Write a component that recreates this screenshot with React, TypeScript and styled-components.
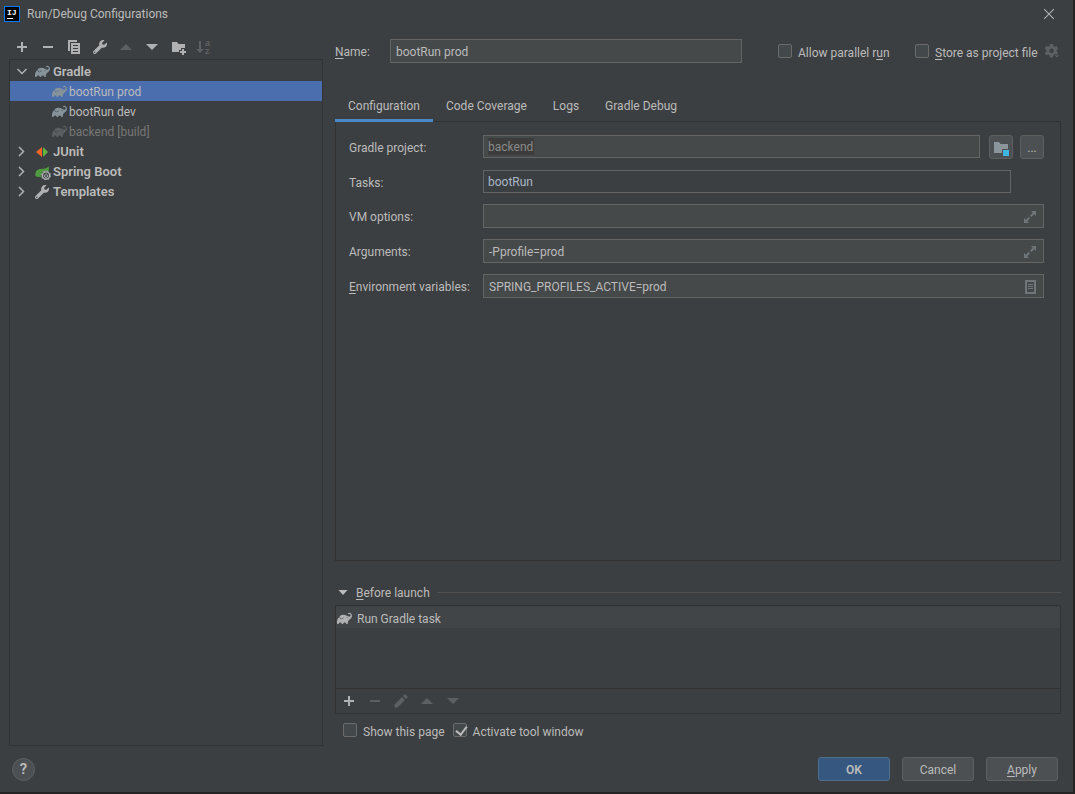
import React, { useState } from "react";
import styled, { createGlobalStyle, css } from "styled-components";
import { SiGradle } from "react-icons/si";
import { FaWrench } from "react-icons/fa";

const c = {
  bg: "#3c3f41",
  field: "#45494a",
  fieldBorder: "#646464",
  line: "#323232",
  text: "#bbbbbb",
  muted: "#777777",
  icon: "#afb1b3",
  iconOff: "#5d6062",
  select: "#4b6eaf",
  accent: "#4a88c7",
};

const GlobalStyle = createGlobalStyle`
  * { box-sizing: border-box; }
  body { margin: 0; background: #2b2b2b; }
  body, button, input { font-family: Roboto, "Noto Sans CJK KR", sans-serif; font-size: 12px; line-height: 20px; color: ${c.text}; }
  button { padding: 0; border: 0; background: none; cursor: default; }
  ul { list-style: none; margin: 0; padding: 0; }
  svg { display: block; flex: none; }
  u { text-underline-offset: 2px; }
`;

const Backdrop = styled.div`
  display: flex;
  min-height: 100vh;
  padding: 0 2px 2px 0;
  background: #242424;
`;

const Dialog = styled.div`
  flex: 1;
  min-width: 0;
  display: flex;
  flex-direction: column;
  background: ${c.bg};
`;

const TitleBar = styled.header`
  display: flex;
  align-items: center;
  height: 27px;
  padding: 0 11px 0 4px;
  gap: 7px;
`;

const Title = styled.h1`
  flex: 1;
  margin: 0;
  padding-top: 1px;
  font-size: 12px;
  font-weight: 400;
`;

const Main = styled.main`
  flex: 1;
  display: grid;
  grid-template-columns: 314px minmax(0, 1fr);
  gap: 12px;
  padding: 8px 12px 0 9px;
`;

const Sidebar = styled.aside`
  display: flex;
  flex-direction: column;
`;

const Toolbar = styled.div`
  display: flex;
  align-items: center;
  height: 24px;
`;

const ToolButton = styled.button<{ $narrow?: boolean }>`
  display: flex;
  align-items: center;
  justify-content: center;
  width: ${(p) => (p.$narrow ? 18 : 26)}px;
  height: 24px;
  color: ${c.icon};
  &:disabled { color: ${c.iconOff}; }
`;

const Tree = styled.ul`
  && { padding-top: 1px; }
  flex: 1;
  border: 1px solid ${c.line};
`;

const TreeRow = styled.button<{ $selected?: boolean; $child?: boolean; $bold?: boolean; $off?: boolean }>`
  display: flex;
  align-items: center;
  width: 100%;
  height: 20px;
  padding-top: 1px;
  padding-left: ${(p) => (p.$child ? 42 : 4)}px;
  font-size: ${(p) => (p.$bold ? 13 : 12)}px;
  font-weight: ${(p) => (p.$bold ? 600 : 400)};
  color: ${(p) => (p.$off ? c.muted : c.text)};
  background: ${(p) => (p.$selected ? c.select : "transparent")};
`;

const TreeIcon = styled.span<{ $off?: boolean; $group?: boolean }>`
  display: flex;
  width: ${(p) => (p.$group ? 18 : 17)}px;
  color: ${(p) => (p.$off ? "#5a5e61" : "#87939a")};
`;

const Expander = styled.span`
  display: flex;
  width: 21px;
  color: ${c.icon};
`;

const Content = styled.section`
  display: flex;
  flex-direction: column;
  padding: 4px 0 4px;
`;

const NameRow = styled.div`
  display: flex;
  align-items: center;
`;

const NameLabel = styled.label`
  width: 55px;
  padding-top: 2px;
`;

const field = css`
  height: 24px;
  min-width: 0;
  padding: 1px 5px 0;
  border: 1px solid ${c.fieldBorder};
  border-radius: 0;
  background: ${c.field};
  outline: none;
`;

const NameInput = styled.input`
  ${field}
  flex: 1;
  margin-right: 36px;
`;

const CheckLabel = styled.label<{ $width?: number }>`
  display: flex;
  align-items: center;
  gap: 6px;
  min-width: ${(p) => (p.$width ? `${p.$width}px` : "auto")};
  padding-top: 4px;
  white-space: nowrap;
`;

const Check = styled.input.attrs({ type: "checkbox" })`
  appearance: none;
  position: relative;
  width: 14px;
  height: 14px;
  margin: 0 0 4px;
  border: 1px solid #6b6b6b;
  border-radius: 2px;
  background: #43494a;
  &:checked::after {
    content: "";
    position: absolute;
    left: 4px;
    top: 0;
    width: 5px;
    height: 9px;
    border: solid ${c.text};
    border-width: 0 2px 2px 0;
    transform: rotate(38deg);
  }
`;

const Tabs = styled.div`
  display: flex;
  margin: 27px 0 -1px;
`;

const Tab = styled.button<{ $active?: boolean }>`
  position: relative;
  height: 32px;
  padding: 2px 13px 0;
  border-bottom: 3px solid ${(p) => (p.$active ? c.accent : "transparent")};
`;

const Panel = styled.div`
  flex: 1;
  border: 1px solid ${c.line};
  padding: 13px 16px 16px 13px;
`;

const Form = styled.form`
  display: flex;
  flex-direction: column;
  gap: 11px;
`;

const FormRow = styled.div`
  display: flex;
  align-items: flex-start;
`;

const FormLabel = styled.label`
  width: 134px;
  padding-top: 3px;
`;

const ProjectInput = styled.input`
  ${field}
  flex: 1;
  height: 23px;
  padding: 1px 4px 0;
  margin-right: 9px;
  color: #8a8a8a;
  background: linear-gradient(#3c3c3c, #3c3c3c) 4px 2px / 46px 17px no-repeat ${c.field};
`;

const TasksInput = styled.input`
  ${field}
  flex: 1;
  height: 23px;
  padding: 1px 4px 0;
  margin-right: 33px;
  color: #a9b7c6;
  background: ${c.bg};
`;

const SmallButton = styled.button`
  display: flex;
  align-items: center;
  justify-content: center;
  width: 24px;
  height: 24px;
  padding-top: 1px;
  border: 1px solid #5e6060;
  border-radius: 3px;
  background: #4c5052;
  & + & { margin-left: 7px; }
`;

const FieldBox = styled.div`
  ${field}
  flex: 1;
  display: flex;
  align-items: center;
`;

const BareInput = styled.input`
  flex: 1;
  min-width: 0;
  padding: 0;
  border: 0;
  background: none;
  outline: none;
`;

const IconButton = styled.button`
  display: flex;
  color: #6e7679;
`;

const SectionHead = styled.div`
  display: flex;
  align-items: center;
  gap: 7px;
  height: 20px;
  margin: 21px 0 3px;
  &::after {
    content: "";
    flex: 1;
    height: 1px;
    background: #515151;
  }
`;

const SectionToggle = styled.button`
  display: flex;
  align-items: center;
  gap: 5px;
  padding-top: 2px;
`;

const LaunchBox = styled.div`
  border: 1px solid ${c.line};
`;

const LaunchList = styled.ul`
  && { padding-top: 1px; }
  height: 82px;
`;

const LaunchItem = styled.li`
  display: flex;
  align-items: center;
  gap: 5px;
  height: 21px;
  padding: 2px 0 0 1px;
  background: #414547;
  color: ${c.text};
`;

const LaunchToolbar = styled(Toolbar)`
  height: 25px;
  border-top: 1px solid ${c.line};
`;

const ChecksRow = styled.div`
  display: flex;
  gap: 8px;
  padding: 4px 8px 0;
`;

const Footer = styled.footer`
  display: flex;
  align-items: center;
  gap: 12px;
  padding: 11px 15px 11px 12px;
`;

const HelpButton = styled.button`
  width: 23px;
  height: 23px;
  margin-right: auto;
  border: 1px solid #5e6060;
  border-radius: 50%;
  background: #4c5052;
  font-size: 15px;
  font-weight: 600;
`;

const ActionButton = styled.button<{ $primary?: boolean }>`
  width: 72px;
  height: 24px;
  padding-top: 2px;
  border: 1px solid ${(p) => (p.$primary ? "#4c708c" : "#5e6060")};
  border-radius: 3px;
  background: ${(p) => (p.$primary ? "#365880" : "#4c5052")};
  font-weight: ${(p) => (p.$primary ? 600 : 400)};
`;

const Icon = ({ children, size = 16 }: { children: React.ReactNode; size?: number }) => (
  <svg width={size} height={size} viewBox="0 0 16 16" fill="currentColor" aria-hidden="true">
    {children}
  </svg>
);

const Logo = () => (
  <Icon>
    <rect x="0.5" y="0.5" width="15" height="15" fill="#000" stroke="#087cfa" />
    <text x="3" y="9" fontSize="8" fontWeight="700" fontFamily="Liberation Mono, monospace" fill="#fff">IJ</text>
    <rect x="3" y="12" width="6" height="1" fill="#fff" />
  </Icon>
);
const Close = () => (
  <Icon size={14}><path d="M2.500 2.500l11 11M13.500 2.500l-11 11" stroke="currentColor" strokeWidth="1.200" fill="none" /></Icon>
);
const Plus = () => <Icon><path d="M7 3h2v4h4v2H9v4H7V9H3V7h4z" /></Icon>;
const Minus = () => <Icon><path d="M3 7h10v2H3z" /></Icon>;
const Up = () => <Icon><path d="M2 11l6-6 6 6z" /></Icon>;
const Down = () => <Icon><path d="M2 5l6 6 6-6z" /></Icon>;
const Collapse = () => <Icon><path d="M3.500 5h9L8 10z" /></Icon>;
const Copy = () => (
  <Icon>
    <path d="M2 1h9v2H4v9H2z" />
    <path fillRule="evenodd" d="M5 4h9v11H5zM7 6v1h5V6zm0 3v1h5V9zm0 3v1h5v-1z" />
  </Icon>
);
const NewFolder = () => (
  <Icon>
    <path d="M2 3h5l1.500 2H15v4h-4v2H9v2H2z" />
    <path d="M12 10h2v2h2v2h-2v2h-2v-2h-2v-2h2z" />
  </Icon>
);
const Sort = () => (
  <Icon>
    <path d="M3 2h2v8h3l-4 4-4-4h3z" />
    <text x="9" y="7" fontSize="9" fontWeight="700" fontFamily="Liberation Sans, sans-serif">a</text>
    <text x="9" y="15" fontSize="9" fontWeight="700" fontFamily="Liberation Sans, sans-serif">z</text>
  </Icon>
);
const Pencil = () => <Icon><path d="M1.500 11.500l7.500-7.500 3 3-7.500 7.500h-3zM10 3l1.500-1.500q.5-.5 1 0l2 2q.5.5 0 1L13 6z" /></Icon>;
const Chevron = ({ open }: { open?: boolean }) => (
  <Icon><path d={open ? "M3.500 5l4.500 4.500L12.500 5" : "M5 3l4.500 4.500L5 12"} fill="none" stroke="currentColor" strokeWidth="1.500" /></Icon>
);
const JUnit = () => (
  <Icon>
    <path d="M7 3v10L1 8z" fill="#f26522" />
    <path d="M8 3v10l5-5z" fill="#62b543" />
  </Icon>
);
const SpringBoot = () => (
  <Icon>
    <path d="M13.500 2c.8 3 .5 5-.5 6.500A5 5 0 0 0 6 13c-2 .3-4.500-.2-5.500-1C-.5 5.500 4 5 8 4.700 11 4.500 12.500 4 13.500 2z" fill="#4f9a41" />
    <circle cx="11" cy="11.500" r="4.500" fill="#3c3f41" />
    <circle cx="11" cy="11.500" r="3.600" fill="none" stroke="#afb1b3" strokeWidth="1.300" />
    <circle cx="11" cy="11.500" r="4.500" fill="none" stroke="#afb1b3" strokeDasharray="1.770 1.770" />
    <path d="M9.700 10.700a1.700 1.700 0 1 0 2.600 0M11 9.300v2.200" fill="none" stroke="#afb1b3" />
  </Icon>
);
const Gear = () => (
  <Icon>
    <path fillRule="evenodd" d="M6 1h3l.4 2 1.300.8 2-.7 1.500 2.500L12.700 7v1.500l1.500 1.300-1.500 2.500-2-.7-1.300.8-.4 2H6l-.4-2-1.300-.8-2 .7L.8 9.800l1.500-1.300V7L.8 5.600l1.500-2.500 2 .7L5.600 3zM7.500 5.500a2.200 2.200 0 1 0 0 4.400 2.200 2.200 0 0 0 0-4.400z" />
    <path d="M10 12h6l-3 3z" stroke={c.bg} strokeWidth=".8" />
  </Icon>
);
const ProjectFolder = () => (
  <Icon>
    <path d="M1 2h5l1.500 2H15v5H9v4H1z" fill="#8a959c" />
    <path d="M10 10h6v6h-6z" fill="#40b6e0" />
  </Icon>
);
const Expand = () => (
  <Icon>
    <path d="M9 2h5v5l-1.700-1.700L9.300 8 8 6.700l2.700-3zM2 9l1.700 1.700L6.700 8 8 9.300l-2.700 3L7 14H2z" />
  </Icon>
);
const ListDoc = () => (
  <Icon>
    <path fillRule="evenodd" d="M3 1h11v14H3zM5 3v10h7V3z" />
    <path d="M6 5h5v1H6zM6 7h5v1H6zM6 9h5v1H6z" />
  </Icon>
);

export default function App() {
  const [selected, setSelected] = useState("bootRun prod");
  const [tab, setTab] = useState("Configuration");
  const children = [
    { name: "bootRun prod" },
    { name: "bootRun dev" },
    { name: "backend [build]", off: true },
  ];
  const groups = [
    { name: "JUnit", icon: <JUnit /> },
    { name: "Spring Boot", icon: <SpringBoot /> },
    { name: "Templates", icon: <FaWrench size={14} color={c.icon} /> },
  ];
  return (
    <>
      <GlobalStyle />
      <Backdrop>
        <Dialog role="dialog" aria-labelledby="title">
          <TitleBar>
            <Logo />
            <Title id="title">Run/Debug Configurations</Title>
            <ToolButton aria-label="Close"><Close /></ToolButton>
          </TitleBar>
          <Main>
            <Sidebar>
              <Toolbar>
                <ToolButton aria-label="Add"><Plus /></ToolButton>
                <ToolButton aria-label="Remove"><Minus /></ToolButton>
                <ToolButton aria-label="Copy"><Copy /></ToolButton>
                <ToolButton aria-label="Edit templates"><FaWrench size={14} /></ToolButton>
                <ToolButton aria-label="Move up" disabled><Up /></ToolButton>
                <ToolButton aria-label="Move down"><Down /></ToolButton>
                <ToolButton aria-label="New folder"><NewFolder /></ToolButton>
                <ToolButton aria-label="Sort" disabled><Sort /></ToolButton>
              </Toolbar>
              <Tree>
                <li>
                  <TreeRow $bold aria-expanded="true">
                    <Expander><Chevron open /></Expander>
                    <TreeIcon $group><SiGradle size={15} /></TreeIcon>
                    Gradle
                  </TreeRow>
                  <ul>
                    {children.map((item) => (
                      <li key={item.name}>
                        <TreeRow $child $off={item.off} $selected={selected === item.name} onClick={() => setSelected(item.name)}>
                          <TreeIcon $off={item.off}><SiGradle size={15} /></TreeIcon>
                          {item.name}
                        </TreeRow>
                      </li>
                    ))}
                  </ul>
                </li>
                {groups.map((g) => (
                  <li key={g.name}>
                    <TreeRow $bold aria-expanded="false">
                      <Expander><Chevron /></Expander>
                      <TreeIcon $group>{g.icon}</TreeIcon>
                      {g.name}
                    </TreeRow>
                  </li>
                ))}
              </Tree>
            </Sidebar>
            <Content>
              <NameRow>
                <NameLabel htmlFor="name"><u>N</u>ame:</NameLabel>
                <NameInput id="name" defaultValue="bootRun prod" />
                <CheckLabel $width={137}><Check /><span>Allow parallel r<u>u</u>n</span></CheckLabel>
                <CheckLabel $width={128}><Check /><span><u>S</u>tore as project file</span></CheckLabel>
                <ToolButton $narrow aria-label="Storage options" disabled><Gear /></ToolButton>
              </NameRow>
              <Tabs role="tablist">
                {["Configuration", "Code Coverage", "Logs", "Gradle Debug"].map((t) => (
                  <Tab key={t} role="tab" aria-selected={tab === t} $active={tab === t} onClick={() => setTab(t)}>{t}</Tab>
                ))}
              </Tabs>
              <Panel>
                <Form>
                  <FormRow>
                    <FormLabel htmlFor="project">Gradle project:</FormLabel>
                    <ProjectInput id="project" readOnly defaultValue="backend" />
                    <SmallButton type="button" aria-label="Choose project"><ProjectFolder /></SmallButton>
                    <SmallButton type="button" aria-label="Browse">...</SmallButton>
                  </FormRow>
                  <FormRow>
                    <FormLabel htmlFor="tasks">Tasks:</FormLabel>
                    <TasksInput id="tasks" defaultValue="bootRun" />
                  </FormRow>
                  <FormRow>
                    <FormLabel htmlFor="vm">VM options:</FormLabel>
                    <FieldBox>
                      <BareInput id="vm" />
                      <IconButton type="button" aria-label="Expand"><Expand /></IconButton>
                    </FieldBox>
                  </FormRow>
                  <FormRow>
                    <FormLabel htmlFor="args">Arguments:</FormLabel>
                    <FieldBox>
                      <BareInput id="args" defaultValue="-Pprofile=prod" />
                      <IconButton type="button" aria-label="Expand"><Expand /></IconButton>
                    </FieldBox>
                  </FormRow>
                  <FormRow>
                    <FormLabel htmlFor="env"><u>E</u>nvironment variables:</FormLabel>
                    <FieldBox>
                      <BareInput id="env" defaultValue="SPRING_PROFILES_ACTIVE=prod" />
                      <IconButton type="button" aria-label="Edit variables"><ListDoc /></IconButton>
                    </FieldBox>
                  </FormRow>
                </Form>
              </Panel>
              <SectionHead>
                <SectionToggle aria-expanded="true"><Collapse /><span><u>B</u>efore launch</span></SectionToggle>
              </SectionHead>
              <LaunchBox>
                <LaunchList>
                  <LaunchItem><SiGradle size={15} color={c.icon} />Run Gradle task</LaunchItem>
                </LaunchList>
                <LaunchToolbar>
                  <ToolButton aria-label="Add task"><Plus /></ToolButton>
                  <ToolButton aria-label="Remove task" disabled><Minus /></ToolButton>
                  <ToolButton aria-label="Edit task" disabled><Pencil /></ToolButton>
                  <ToolButton aria-label="Move task up" disabled><Up /></ToolButton>
                  <ToolButton aria-label="Move task down" disabled><Down /></ToolButton>
                </LaunchToolbar>
              </LaunchBox>
              <ChecksRow>
                <CheckLabel><Check />Show this page</CheckLabel>
                <CheckLabel><Check defaultChecked />Activate tool window</CheckLabel>
              </ChecksRow>
            </Content>
          </Main>
          <Footer>
            <HelpButton aria-label="Help">?</HelpButton>
            <ActionButton $primary>OK</ActionButton>
            <ActionButton>Cancel</ActionButton>
            <ActionButton><u>A</u>pply</ActionButton>
          </Footer>
        </Dialog>
      </Backdrop>
    </>
  );
}
